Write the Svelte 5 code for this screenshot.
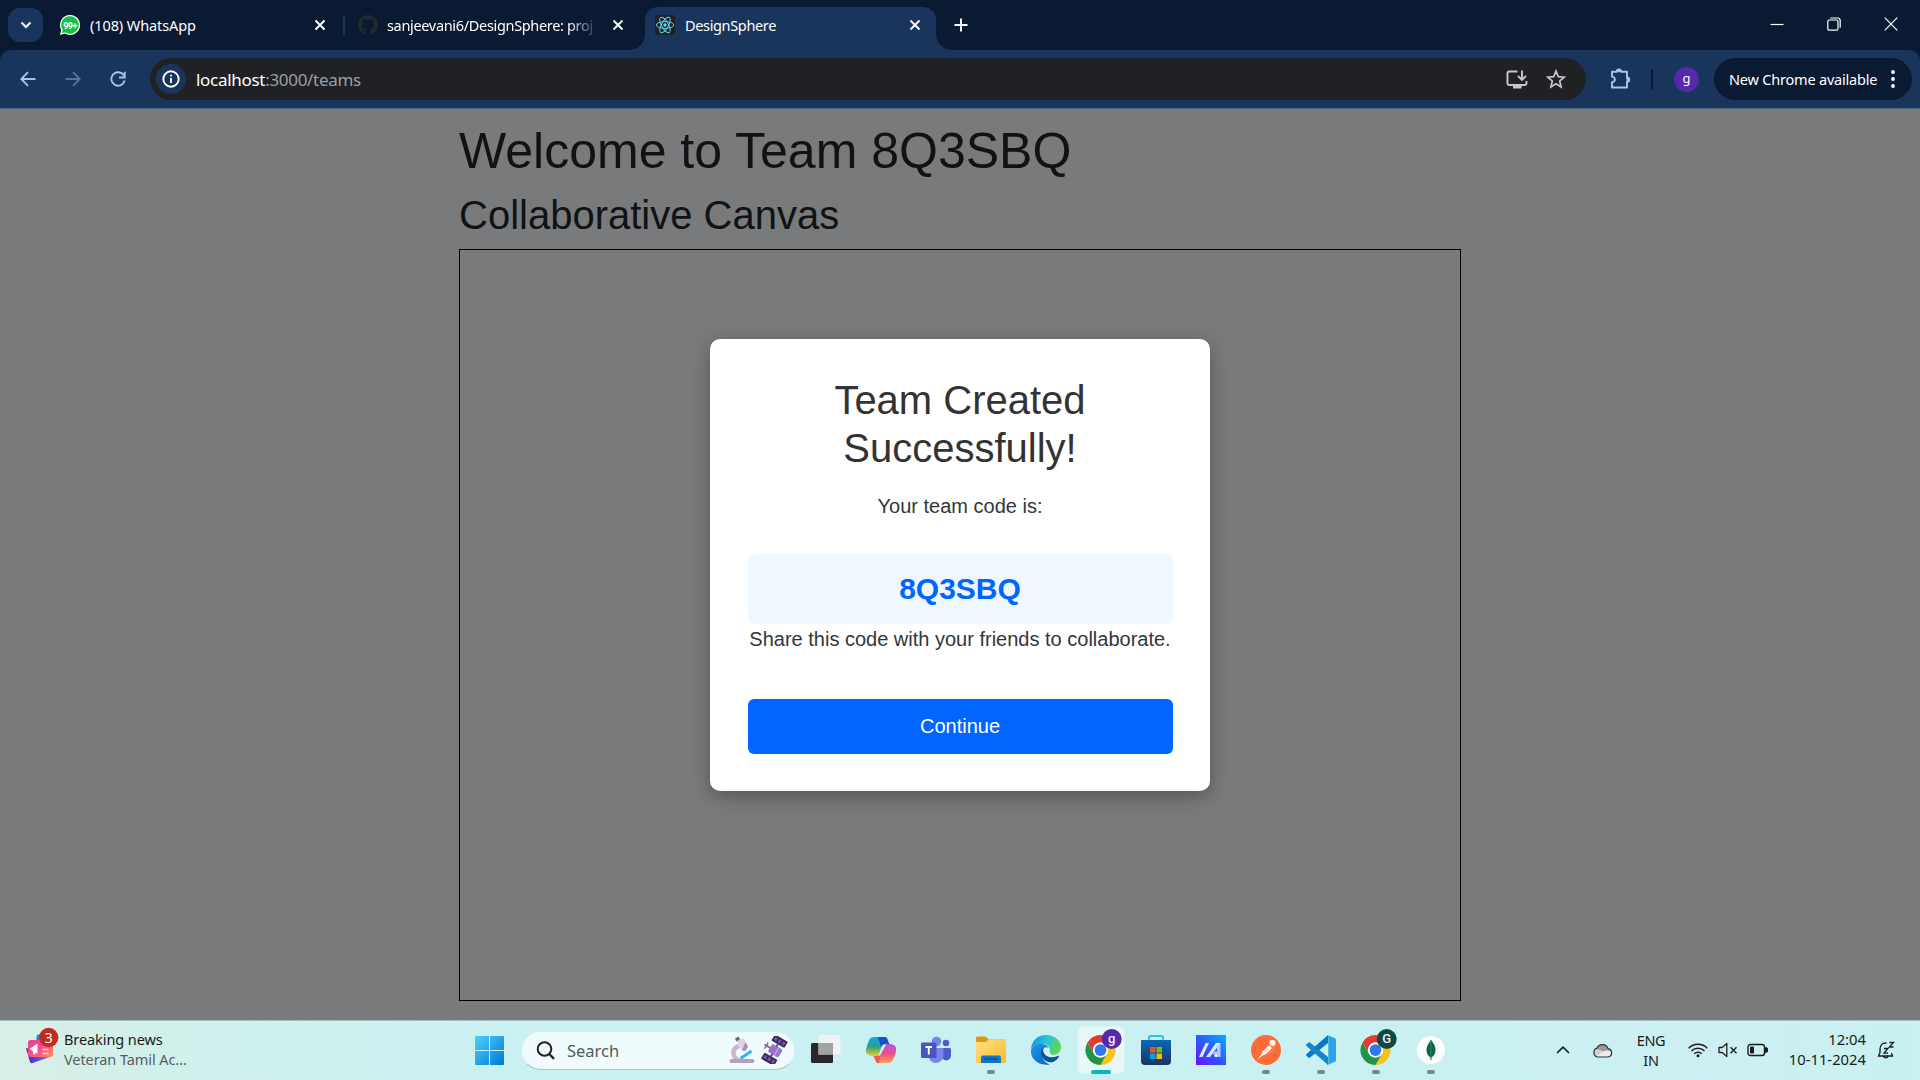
<script>
  const teamCode = '8Q3SBQ';
</script>

{#snippet closeIcon()}
  <svg class="close" viewBox="0 0 12 12" width="12" height="12"><path d="M1.5 1.5l9 9M10.5 1.5l-9 9" stroke="#fff" stroke-width="1.9" /></svg>
{/snippet}

{#snippet chromeIcon(letter, color)}
  <svg viewBox="0 0 55 60" width="55" height="60">
    <g transform="translate(12.5 15) scale(.625)">
      <path d="M24 12H44.8A24 24 0 0 0 3.2 12L13.6 30A12 12 0 0 1 24 12z" fill="#e33b2e" />
      <path d="M44.8 12H24A12 12 0 0 1 34.4 30L24 48A24 24 0 0 0 44.8 12z" fill="#fbc116" />
      <path d="M3.2 12L13.6 30A12 12 0 0 0 34.4 30L24 48A24 24 0 0 1 3.2 12z" fill="#239447" />
      <circle cx="24" cy="24" r="12" fill="#fff" />
      <circle cx="24" cy="24" r="9.4" fill="#2f78ee" />
    </g>
    <circle cx="38.7" cy="19" r="10" fill={color} />
    <text class="badge-letter" x="38.7" y="23" text-anchor="middle">{letter}</text>
  </svg>
{/snippet}

<div class="screen">
  <div class="tabs">
    <div class="tab-search">
      <svg viewBox="0 0 12 8" width="12" height="8"><path d="M1.5 1.5L6 6l4.500-4.500" fill="none" stroke="#fff" stroke-width="2" /></svg>
    </div>
    <div class="tab first">
      <svg viewBox="0 0 20 20" width="20" height="20">
        <path d="M10 0a10 10 0 1 1-5 18.600L0 20l1.200-5.200A10 10 0 0 1 10 0z" fill="#fff" />
        <path d="M10 1.300a8.700 8.700 0 1 1-4.700 16L1.800 18.300l.9-3.400A8.700 8.700 0 0 1 10 1.300z" fill="#12c143" />
        <text class="wa" x="10" y="13.500" text-anchor="middle">99+</text>
      </svg>
      <span class="title t1">(108) WhatsApp</span>
      {@render closeIcon()}
    </div>
    <div class="tab-sep"></div>
    <div class="tab second">
      <svg viewBox="0 0 16 16" width="20" height="20"><path fill="#24292f" d="M8 0C3.580 0 0 3.580 0 8c0 3.540 2.290 6.530 5.470 7.590.4.07.55-.17.55-.38 0-.19-.01-.82-.01-1.490-2.010.37-2.530-.49-2.690-.94-.09-.23-.48-.94-.82-1.130-.28-.15-.68-.52-.01-.53.63-.01 1.080.58 1.230.82.72 1.210 1.870.87 2.330.66.07-.52.28-.87.51-1.070-1.780-.2-3.640-.89-3.640-3.950 0-.87.31-1.590.82-2.150-.08-.2-.36-1.020.08-2.120 0 0 .67-.21 2.200.82a7.640 7.640 0 0 1 4 0c1.530-1.040 2.200-.82 2.200-.82.44 1.100.16 1.920.08 2.120.51.56.82 1.270.82 2.150 0 3.070-1.870 3.750-3.650 3.950.29.25.54.73.54 1.480 0 1.070-.01 1.930-.01 2.200 0 .21.15.46.55.38A8.010 8.010 0 0 0 16 8c0-4.420-3.580-8-8-8z" /></svg>
      <span class="title t2">sanjeevani6/DesignSphere: proj</span>
      {@render closeIcon()}
    </div>
    <div class="tab active">
      <svg viewBox="0 0 20 20" width="20" height="20">
        <rect width="20" height="20" rx="2" fill="#222" />
        <g fill="none" stroke="#61dafb" stroke-width=".9">
          <ellipse cx="10" cy="10" rx="8.700" ry="3.400" />
          <ellipse cx="10" cy="10" rx="8.700" ry="3.400" transform="rotate(60 10 10)" />
          <ellipse cx="10" cy="10" rx="8.700" ry="3.400" transform="rotate(120 10 10)" />
        </g>
        <circle cx="10" cy="10" r="1.700" fill="#61dafb" />
      </svg>
      <span class="title t3">DesignSphere</span>
      {@render closeIcon()}
    </div>
    <svg class="plus" viewBox="0 0 14 14" width="14" height="14"><path d="M7 .5v13M.5 7h13" stroke="#fff" stroke-width="1.900" /></svg>
    <div class="window-buttons">
      <svg viewBox="0 0 14 14" width="14" height="14"><path d="M.5 7.500h13" stroke="#fff" stroke-width="1.200" /></svg>
      <svg viewBox="0 0 14 14" width="14" height="14" fill="none" stroke="#fff" stroke-width="1.200"><rect x=".8" y="3" width="10.200" height="10.200" rx="1.500" /><path d="M3.200 1h7.300A2.700 2.700 0 0 1 13.200 3.700v7" /></svg>
      <svg viewBox="0 0 14 14" width="14" height="14"><path d="M.7.7l12.600 12.600M13.300.7L.7 13.300" stroke="#fff" stroke-width="1.200" /></svg>
    </div>
  </div>

  <div class="toolbar-back">
    <div class="toolbar">
      <svg class="back" viewBox="0 0 16 16" width="16" height="16"><path d="M15.500 8H1.500M8 1.200L1.300 8 8 14.800" fill="none" stroke="#a8c3ef" stroke-width="1.800" /></svg>
      <svg class="forward" viewBox="0 0 16 16" width="16" height="16"><path d="M.5 8h14M8 1.200L14.700 8 8 14.800" fill="none" stroke="#56729f" stroke-width="1.800" /></svg>
      <svg class="reload" viewBox="0 0 16 16" width="16" height="16"><path d="M13.800 4.500A6.700 6.700 0 1 0 14.600 9.500" fill="none" stroke="#a8c3ef" stroke-width="1.900" /><path d="M14.700.8v5.700H9" fill="none" stroke="#a8c3ef" stroke-width="1.900" /></svg>
      <div class="omnibox">
        <div class="info">
          <svg viewBox="0 0 18 18" width="18" height="18"><circle cx="9" cy="9" r="7.700" fill="none" stroke="#fff" stroke-width="1.900" /><path d="M9 8v5M9 4.800v1.800" stroke="#fff" stroke-width="1.800" /></svg>
        </div>
        <span class="url"><b>localhost</b>:3000/teams</span>
        <svg class="install" viewBox="0 0 22 19" width="22" height="19"><path d="M11.500 1.500H3a1.500 1.500 0 0 0-1.500 1.500v10.500A1.500 1.500 0 0 0 3 15h16a1.500 1.500 0 0 0 1.500-1.500V11" fill="none" stroke="#c7c7c7" stroke-width="1.900" /><path d="M7 15h8.500v3.500H7z" fill="#c7c7c7" /><path d="M16 .5v9M12 6l4 4 4-4" fill="none" stroke="#c7c7c7" stroke-width="1.900" /></svg>
        <svg class="star" viewBox="0 0 20 20" width="20" height="20"><path d="M10 2l2.300 5.600 6 .5-4.600 3.900 1.400 5.900L10 14.700 4.900 17.900l1.400-5.900L1.700 8.100l6-.5z" fill="none" stroke="#c7c7c7" stroke-width="1.700" /></svg>
      </div>
      <svg class="puzzle" viewBox="0 0 22 22" width="22" height="22"><path d="M2 3.700h4.700a2.300 2.300 0 0 1 4.600 0H17v5.800a2.200 2.200 0 0 1 0 4.400v5.600H2v-5.200c3.800-.5 3.800-5.200 0-5.700z" fill="none" stroke="#a8c3ef" stroke-width="1.900" stroke-linejoin="round" /><path d="M6.700 3.700a2.300 2.300 0 0 1 4.600 0zM17 9.500a2.200 2.200 0 0 1 0 4.400z" fill="#a8c3ef" stroke="#a8c3ef" /></svg>
      <div class="tool-sep"></div>
      <div class="avatar">g</div>
      <div class="update">
        <span>New Chrome available</span>
        <svg viewBox="0 0 4 18" width="4" height="18" fill="#fff"><circle cx="2" cy="2" r="1.900" /><circle cx="2" cy="9" r="1.900" /><circle cx="2" cy="16" r="1.900" /></svg>
      </div>
    </div>
  </div>

  <div class="page">
    <main class="workspace">
      <h1>Welcome to Team {teamCode}</h1>
      <h2>Collaborative Canvas</h2>
      <div class="canvas"></div>
    </main>
    <section class="modal">
      <h2>Team Created Successfully!</h2>
      <p>Your team code is:</p>
      <div class="code">{teamCode}</div>
      <p>Share this code with your friends to collaborate.</p>
      <button>Continue</button>
    </section>
  </div>

  <footer class="taskbar">
    <div class="news">
      <svg viewBox="0 0 36 40" width="36" height="40">
        <defs>
          <linearGradient id="nw" x1="0" y1="0" x2="1" y2="1"><stop offset="0" stop-color="#ec3f86" /><stop offset=".5" stop-color="#f64f95" /><stop offset="1" stop-color="#ff9150" /></linearGradient>
          <linearGradient id="nb" x1="0" y1="0" x2="1" y2="0"><stop offset="0" stop-color="#3a2fc4" /><stop offset="1" stop-color="#9a5bff" /></linearGradient>
        </defs>
        <path d="M12 9l8-2v8h-9z" fill="#2687e8" />
        <path d="M1 22l24 5v4L7.500 37a2 2 0 0 1-2.700-1.500z" fill="url(#nb)" />
        <rect x="3" y="14" width="25" height="17" rx="2.500" fill="url(#nw)" />
        <path d="M4.500 23l8-5.500v10zM7.500 25h3v3.500h-2z" fill="#fff" />
        <path d="M17.500 23.500h6M17.500 27.500h6" stroke="#ffd2d8" stroke-width="1.600" />
        <circle cx="23.700" cy="11.500" r="9.700" fill="#c42b1c" />
        <text class="count" x="23.700" y="16.500" text-anchor="middle">3</text>
      </svg>
      <div class="headline"><span class="n1">Breaking news</span><span class="n2">Veteran Tamil Ac...</span></div>
    </div>

    <div class="app">
      <svg viewBox="0 0 29 29" width="29" height="29">
        <defs><linearGradient id="win" x1="0" y1="0" x2="1" y2="1" gradientUnits="objectBoundingBox"><stop offset="0" stop-color="#4fd0fb" /><stop offset="1" stop-color="#0078d4" /></linearGradient></defs>
        <path d="M1 0h13v14H0V1a1 1 0 0 1 1-1zM15 0h13a1 1 0 0 1 1 1v13H15zM0 15h14v14H1a1 1 0 0 1-1-1zM15 15h14v13a1 1 0 0 1-1 1H15z" fill="url(#win)" />
      </svg>
    </div>

    <div class="search">
      <svg viewBox="0 0 19 19" width="19" height="19"><circle cx="8.500" cy="8" r="6.800" fill="none" stroke="#222" stroke-width="2" /><path d="M13.300 13l4.700 4.800" stroke="#222" stroke-width="2.400" /></svg>
      <span>Search</span>
      <svg class="scope" viewBox="0 0 26 28" width="26" height="28">
        <path d="M9.500 8C1 10 .500 18 5 23.500h7C5 20 5 14 11 12z" fill="#c9b8d2" />
        <path d="M8.500 5l6-3 4.500 8.500-6 4.500z" fill="#ded0e3" />
        <path d="M13 14.500L16.500 6l2.500 4.500-2.500 4.500z" fill="#a78fb8" />
        <path d="M6 2.500L9.500.5l1.500 3-3.500 2z" fill="#6d666f" />
        <path d="M11.500 22.500L22.500 15" stroke="#35aeea" stroke-width="2.800" />
        <rect x=".5" y="23" width="25" height="4" rx="2" fill="#b0a1be" />
      </svg>
      <svg class="sat" viewBox="0 0 28 28" width="28" height="28">
        <g transform="rotate(30 14 14)">
          <rect x="7" y="0" width="15" height="7" rx="1" fill="#35284d" /><rect x="7" y="21" width="15" height="7" rx="1" fill="#35284d" />
          <path d="M8.500 3.500h3M13 3.500h3M17.500 3.500h3M8.500 24.500h3M13 24.500h3M17.500 24.500h3" stroke="#7750b6" stroke-width="3.500" />
          <path d="M14.500 7v14" stroke="#5b487a" stroke-width="2" />
          <rect x="9.500" y="9.500" width="12" height="9" rx="1.500" fill="#9871cf" /><path d="M17 9.500v9" stroke="#b697df" stroke-width="2" /><path d="M9.500 14H3" stroke="#7c5aab" stroke-width="1.500" /><path d="M3.500 9.500a6 6 0 0 0 0 9z" fill="#8a68bd" transform="rotate(180 4 14)" />
        </g>
      </svg>
    </div>

    <div class="app">
      <svg viewBox="0 0 30 30" width="30" height="30"><rect x="0" y="8" width="22" height="20" rx="1.500" fill="#282828" /><path d="M9 0h19a1.500 1.500 0 0 1 1.500 1.500v18H7.500v-18A1.500 1.500 0 0 1 9 0z" fill="#f4f2f3" opacity=".9" /><path d="M7.500 8H22v11.500H7.500z" fill="#a3a3a3" /></svg>
    </div>
    <div class="app">
      <svg viewBox="0 0 30 28" width="30" height="28">
        <defs>
          <linearGradient id="cpa" x1="0" y1="0" x2="0" y2="1"><stop offset="0" stop-color="#12a4ef" /><stop offset=".5" stop-color="#2d9f88" /><stop offset="1" stop-color="#e5d51f" /></linearGradient>
          <linearGradient id="cpb" x1="0" y1="0" x2="0" y2="1"><stop offset="0" stop-color="#ac5be8" /><stop offset=".5" stop-color="#ee4d91" /><stop offset="1" stop-color="#ffa148" /></linearGradient>
        </defs>
        <path d="M8 1h11c3 0 3 7 5 7h-4c-3 0-4 1-5 4l-2 6c-1 3-3 2-6 2C-1 20-1 15 1 10 3 4 4 1 8 1z" fill="url(#cpa)" />
        <path d="M12 1h7c3 0 3 7 5 7h-4c-3 0-4 1-5 3z" fill="#1650c9" />
        <path d="M22 27H12c-3 0-3-7-5-7h3c3 0 4-1 5-4l2-6c1-3 3-2 6-2 8 0 8 5 6 11-2 5-3 8-7 8z" fill="url(#cpb)" />
        <path d="M7 20h3c3 0 4-1 5-4l1-3-3 14h-1c-3 0-3-7-5-7z" fill="#f15b4a" />
        <path d="M17.500 8.500h2.500L14 19.500h-3c2-.5 3-1.500 4-4.500z" fill="#dff6f5" />
      </svg>
    </div>
    <div class="app">
      <svg viewBox="0 0 30 28" width="30" height="28">
        <circle cx="15.500" cy="5.500" r="4.800" fill="#7b83eb" /><circle cx="25" cy="7" r="3.300" fill="#5059c9" />
        <path d="M20 12h8.500a1.500 1.500 0 0 1 1.500 1.500V19c0 5-5 7-8 4z" fill="#5059c9" />
        <path d="M9 12h12a1.500 1.500 0 0 1 1.500 1.500V19c0 10-15 11-15 0z" fill="#7b83eb" />
        <rect x="0" y="6.500" width="15.500" height="15.500" rx="1.500" fill="#4b53bc" />
        <path d="M4.500 11h6.500M7.750 11v7.500" stroke="#fff" stroke-width="1.900" />
      </svg>
    </div>
    <div class="app">
      <svg viewBox="0 0 30 28" width="30" height="28">
        <defs><linearGradient id="fold" x1="0" y1="0" x2="1" y2="1"><stop offset="0" stop-color="#ffe28a" /><stop offset="1" stop-color="#fdb92a" /></linearGradient></defs>
        <path d="M0 2a1.500 1.500 0 0 1 1.500-1.500h8L13 3.500h15.500A1.500 1.500 0 0 1 30 5v5H0z" fill="#dd9b0c" />
        <path d="M0 6h10l3-2.500h15.500A1.500 1.500 0 0 1 30 5v22H0z" fill="url(#fold)" />
        <path d="M5 27v-5.500a2 2 0 0 1 2-2h16a2 2 0 0 1 2 2V27z" fill="#0f76c8" /><path d="M8.500 23h13" stroke="#084f91" stroke-width="1.500" />
      </svg>
      <i class="dot"></i>
    </div>
    <div class="app">
      <svg viewBox="0 0 30 30" width="30" height="30">
        <defs>
          <linearGradient id="ed1" x1="0" y1=".2" x2="1" y2=".5"><stop offset="0" stop-color="#1b8fe0" /><stop offset=".5" stop-color="#2dc2dc" /><stop offset="1" stop-color="#60d94d" /></linearGradient>
          <linearGradient id="ed2" x1="0" y1="0" x2="1" y2="1"><stop offset="0" stop-color="#1c9be8" /><stop offset="1" stop-color="#0b62bc" /></linearGradient>
        </defs>
        <path d="M0 14C1 5 7 0 15 0c9 0 15 6 15 12 0 5-4 8-8 8-3 0-5-1-4-3 2-4-1-8-6-8C7 9 2 11 0 14z" fill="url(#ed1)" />
        <path d="M0 15c1-4 6-6.500 11-6 4 .3 6 2 7 5-5-1.500-8 2-7 7 1 4 4 7.500 8 8.500C9 31-1 25 0 15z" fill="url(#ed2)" />
        <path d="M10 17c-.5 7 7 12.500 13 9.500 2-1 4-3 5-5 0-1-.7-1-1.500-.5C20 24 12 22 12.500 13.500 11 14 10 15.500 10 17z" fill="#0d529c" />
        <circle cx="15.500" cy="15.500" r="3.200" fill="#d3f4f4" />
        <path d="M13 17c1 4 5 5 9 4l-4-4z" fill="#d3f4f4" />
      </svg>
    </div>
    <div class="app selected">{@render chromeIcon('g', '#5529a8')}<i class="dot wide"></i></div>
    <div class="app">
      <svg viewBox="0 0 30 30" width="30" height="30">
        <defs><linearGradient id="st" x1="0" y1="0" x2="0" y2="1"><stop offset="0" stop-color="#0b68b4" /><stop offset="1" stop-color="#173564" /></linearGradient></defs>
        <path d="M8 7V2.500A1.500 1.500 0 0 1 9.500 1h11A1.500 1.500 0 0 1 22 2.500V7" fill="none" stroke="#2cc0f3" stroke-width="2" />
        <path d="M0 6a1 1 0 0 1 1-1h28a1 1 0 0 1 1 1v20a4 4 0 0 1-4 4H4a4 4 0 0 1-4-4z" fill="url(#st)" />
        <path d="M9 12h5.500v5.500H9z" fill="#f25022" /><path d="M15.500 12H21v5.500h-5.500z" fill="#7fba00" /><path d="M9 18.500h5.500V24H9z" fill="#00a4ef" /><path d="M15.500 18.500H21V24h-5.500z" fill="#ffb900" />
      </svg>
    </div>
    <div class="app">
      <svg viewBox="0 0 30 30" width="30" height="30">
        <defs><linearGradient id="as" x1="0" y1="1" x2="1" y2="0"><stop offset="0" stop-color="#6a11ff" /><stop offset=".5" stop-color="#285cff" /><stop offset="1" stop-color="#08aefe" /></linearGradient></defs>
        <path d="M0 0h30v30H0z" fill="url(#as)" />
        <path d="M3 22L9.500 8H13L6.500 22zM10 22L20 8h4.500L14 22z" fill="#dfe6ff" /><path d="M20.500 11.500L24.500 8V22H21.500v-2.500h-5l2-3h3z" fill="#b7caff" /><circle cx="20" cy="20.500" r="1.500" fill="#fff" />
      </svg>
    </div>
    <div class="app">
      <svg viewBox="0 0 30 30" width="30" height="30">
        <circle cx="15" cy="15" r="15" fill="#ff6c37" />
        <circle cx="21.500" cy="8" r="3" fill="#fff" /><path d="M18 10.500l3 2.500-6 6-3.500 1.500-5 4 4-5.500 1-2.500z" fill="#fff" /><path d="M12 18.500l5.500-5.500M23 11l-1 4.500-4 2" stroke="#ff9c78" fill="none" stroke-width=".9" />
      </svg>
      <i class="dot"></i>
    </div>
    <div class="app">
      <svg viewBox="0 0 30 30" width="30" height="30">
        <path d="M22 0v8L4 22.500a1.300 1.300 0 0 1-1.700 0L.5 20.800a1.300 1.300 0 0 1 0-1.900z" fill="#0879c4" />
        <path d="M22 30v-8L4 7.500a1.300 1.300 0 0 0-1.700 0L.5 9.200a1.300 1.300 0 0 0 0 1.900z" fill="#1586ce" />
        <path d="M21.500 0L29 3.300a1.700 1.700 0 0 1 1 1.500v20.400a1.700 1.700 0 0 1-1 1.500L21.500 30c.5-.4.8-1 .8-1.700V1.700c0-.7-.3-1.300-.8-1.700z" fill="#2ba2ec" />
      </svg>
      <i class="dot"></i>
    </div>
    <div class="app">{@render chromeIcon('G', '#0d4a40')}<i class="dot"></i></div>
    <div class="app">
      <svg viewBox="0 0 30 30" width="30" height="30">
        <circle cx="15" cy="15" r="14" fill="#fbfdfd" />
        <path d="M15 5c3 4 4.500 6.500 4.500 10 0 4-2 6-4 7.500l-.3 2.500h-.4l-.3-2.500c-2-1.500-4-3.500-4-7.500 0-3.500 1.500-6 4.500-10z" fill="#116149" /><path d="M15 5v20" stroke="#10aa50" stroke-width=".8" />
      </svg>
      <i class="dot"></i>
    </div>

    <div class="tray">
      <svg viewBox="0 0 14 8" width="14" height="8"><path d="M1 7l6-5.800L13 7" fill="none" stroke="#1b1b1b" stroke-width="1.600" /></svg>
      <svg class="cloud" viewBox="0 0 21 15" width="21" height="15"><path d="M5.500 14A4.700 4.700 0 0 1 5 5a6 6 0 0 1 11 .5A4.300 4.300 0 0 1 16 14z" fill="#999" /><path d="M5.500 14a4.700 4.700 0 0 1-3.500-7c5-2 7 .5 9 1.500L18 13l-2 1z" fill="#cfcfcf" /><path d="M4 13.800l7-5.300c3-1.500 6-1.500 8 .500 0 3-1.500 5-3 5z" fill="#eee" /><path d="M5.500 14A4.700 4.700 0 0 1 5 5a6 6 0 0 1 11 .5A4.300 4.300 0 0 1 16 14z" fill="none" stroke="#333" stroke-width="1.200" /></svg>
      <div class="lang"><span>ENG</span><span>IN</span></div>
      <svg class="wifi" viewBox="0 0 20 16" width="20" height="16" fill="none" stroke="#1b1b1b" stroke-width="1.400"><path d="M.7 6.200a13 13 0 0 1 18.600 0M3.500 9a9.200 9.200 0 0 1 13 0M6.200 11.700a5.500 5.500 0 0 1 7.600 0" /><circle cx="10" cy="13.700" r="1.500" fill="#1b1b1b" stroke="none" /></svg>
      <svg class="speaker" viewBox="0 0 20 16" width="20" height="16" fill="none" stroke="#1b1b1b" stroke-width="1.300"><path d="M1 5.500h3.200L8.800 1.500v13L4.200 10.500H1z" stroke-linejoin="round" /><path d="M12.500 5.300l6 6M18.500 5.300l-6 6" /></svg>
      <svg class="battery" viewBox="0 0 21 14" width="21" height="14"><rect x="1" y="1.500" width="16.500" height="11" rx="2.500" fill="none" stroke="#1b1b1b" stroke-width="1.400" /><rect x="3" y="3.500" width="4" height="7" rx="1" fill="#1b1b1b" /><path d="M18.500 4.500a2.500 2.500 0 0 1 0 5z" fill="#1b1b1b" stroke="#1b1b1b" /></svg>
      <div class="clock"><span>12:04</span><span>10-11-2024</span></div>
      <svg class="bell" viewBox="0 0 18 19" width="18" height="19" fill="none" stroke="#1b1b1b" stroke-width="1.300"><path d="M9.500 2C5 1.800 3 4.500 3 8v3.500L1.500 15h14L14.500 12M6.500 15.500a2.500 2.500 0 0 0 4.500 0" /><path d="M7 7.500h4l-4 4.700h4M12.500 1.500h4L12.500 6h4" /></svg>
    </div>
  </footer>
</div>

<style>
  :global(body) { margin: 0; overflow: hidden; }
  * { box-sizing: border-box; }
  svg { display: block; flex: none; }
  .screen { width: 1920px; height: 1080px; display: flex; flex-direction: column; font-family: "Noto Sans", "Open Sans", sans-serif; }

  .tabs { height: 50px; flex: none; background: #0a1a32; display: flex; align-items: flex-start; padding-left: 8px; color: #fff; }
  .tab-search { width: 35px; height: 34px; margin-top: 8px; border-radius: 12px; background: #1a355c; display: grid; place-items: center; }
  .tab { height: 43px; margin-top: 7px; padding-bottom: 7px; display: flex; align-items: center; flex: none; }
  .title { flex: 1; min-width: 0; margin-left: 10px; font-size: 14.500px; line-height: 20px; white-space: nowrap; }
  .first { width: 285px; margin-left: 17px; padding-right: 19px; }
  .tab-sep { width: 2px; height: 20px; margin: 15px 13px 0 -2px; background: #1a355c; }
  .second { width: 287px; padding-right: 21px; }
  .second .title { margin-left: 9px; margin-right: 15px; -webkit-mask-image: linear-gradient(90deg, #000 86%, transparent 101%); mask-image: linear-gradient(90deg, #000 86%, transparent 101%); }
  .t1 { letter-spacing: -.1px; }
  .t2 { letter-spacing: -.33px; }
  .t3 { letter-spacing: -.35px; }
  .active { width: 291px; padding-left: 10px; padding-right: 15px; background: #1a355c; border-radius: 13px 13px 0 0; position: relative; }
  .active::before, .active::after { content: ""; position: absolute; bottom: 0; width: 15px; height: 15px; }
  .active::before { left: -15px; background: radial-gradient(circle at 0 0, transparent 14.500px, #1a355c 15px); }
  .active::after { right: -15px; background: radial-gradient(circle at 100% 0, transparent 14.500px, #1a355c 15px); }
  .plus { margin: 18px 0 0 18px; }
  .window-buttons { margin: 17px 22px 0 auto; display: flex; gap: 43px; }

  .toolbar-back { height: 59px; flex: none; background: #0a1a32; }
  .toolbar { height: 59px; background: #1a355c; border-radius: 11px 11px 0 0; border-bottom: 1px solid #50678a; display: flex; align-items: center; padding: 0 8px 0 20px; }
  .forward { margin-left: 29px; }
  .reload { margin-left: 29px; }
  .omnibox { width: 1436px; height: 42px; margin-left: 24px; border-radius: 21px; background: #202124; display: flex; align-items: center; padding: 0 20px 0 6px; }
  .info { width: 30px; height: 30px; border-radius: 50%; background: #1a355c; display: grid; place-items: center; }
  .url { margin-left: 10px; padding-top: 1px; flex: 1; color: #9aa0a6; font-size: 17px; line-height: 24px; letter-spacing: -.3px; }
  .url b { font-weight: 400; color: #fff; }
  .star { margin-left: 18px; }
  .puzzle { margin-left: 24px; }
  .tool-sep { width: 2px; height: 20px; margin-left: 19px; background: #0a1a32; }
  .avatar { width: 25px; height: 25px; margin-left: 21px; border-radius: 50%; background: #5529a8; color: #fff; font-size: 13px; line-height: 22px; text-align: center; }
  .update { width: 198px; height: 42px; margin-left: 15px; border-radius: 21px; background: #0a1a32; color: #fff; display: flex; align-items: center; justify-content: space-between; padding: 0 17px 0 15px; font-size: 14.500px; line-height: 20px; white-space: nowrap; letter-spacing: -.2px; }
  .update span { margin-top: -1px; }

  .page { height: 911px; flex: none; display: grid; grid-template: 911px / 1920px; background: #797a7c; font-family: "Liberation Sans", Arial, sans-serif; color: #101214; }
  .workspace { grid-area: 1 / 1; width: 1002px; margin: 12px auto 0; }
  h1, h2, p { margin: 0; font-weight: 400; }
  h1 { font-size: 50px; line-height: 60px; margin-bottom: 10px; }
  h2 { font-size: 40px; line-height: 48px; }
  .workspace h2 { margin-bottom: 10px; }
  .canvas { height: 752px; border: 1px solid #000; }
  .modal { grid-area: 1 / 1; width: 500px; height: 452px; margin: 230px auto 0; padding: 37px 37.500px; background: #fff; border-radius: 10px; box-shadow: 0 5px 19px rgba(0, 0, 0, .3); display: flex; flex-direction: column; text-align: center; z-index: 1; }
  .modal h2 { color: #333; margin-bottom: 19px; }
  .modal p { color: #333639; font-size: 20px; line-height: 30px; white-space: nowrap; }
  .code { height: 70px; margin-top: 33px; border-radius: 6px; background: #f0f8ff; color: #06f; font-size: 30px; line-height: 69px; font-weight: 700; }
  button { height: 55px; margin-top: auto; border: 0; border-radius: 6px; background: #06f; color: #fff; font: 20px/55px "Liberation Sans", Arial, sans-serif; padding: 0; }

  .taskbar { height: 60px; flex: none; display: flex; align-items: center; background: linear-gradient(90deg, #d9efe6 0, #d0f0ec 180px, #caf1f1 500px, #caf1f1 1500px, #cdeff3 1700px, #c9f1f0 100%); box-shadow: inset 0 1px #a7bcbc; }
  .news { width: 462px; padding-left: 25px; display: flex; align-items: center; flex: none; }
  .news svg { margin-top: -8px; }
  .headline { display: flex; flex-direction: column; margin-left: 3px; font-size: 14.500px; letter-spacing: -.08px; line-height: 20px; margin-top: -3px; }
  .n1 { color: #191919; }
  .n2 { color: #56615f; }
  .app { width: 55px; height: 60px; flex: none; display: grid; place-items: center; position: relative; }
  .selected::before { content: ""; position: absolute; inset: 6px 3.500px; border-radius: 6px; background: #e6f8f8; border: 1px solid #daf1f1; }
  .selected svg { position: relative; }
  .dot { position: absolute; left: 24px; bottom: 6px; width: 8px; height: 4px; border-radius: 2px; background: #768786; }
  .wide { left: 17.500px; width: 20px; background: #08b5c4; }
  .search { width: 274px; height: 39px; margin: 0 3px 0 4px; border-radius: 20px; background: #effbfc; border: 1px solid #d9efef; border-bottom-color: #a8c5c5; display: flex; align-items: center; padding: 0 6px 0 14px; flex: none; }
  .search span { margin-left: 12px; flex: 1; color: #505b5b; font-size: 16.500px; }
  .sat { margin-left: 5px; }
  .tray { margin-left: auto; margin-right: 25px; display: flex; align-items: center; color: #1b1b1b; font-size: 14.500px; line-height: 20px; }
  .cloud { margin-left: 22px; }
  .lang { width: 40px; margin-left: 18px; display: flex; flex-direction: column; align-items: center; letter-spacing: -.3px; }
  .wifi { margin-left: 17px; }
  .speaker { margin-left: 10px; }
  .battery { margin-left: 9px; }
  .clock { width: 98px; display: flex; flex-direction: column; align-items: flex-end; margin-top: -2px; font-size: 14.800px; }
  .bell { margin-left: 11px; }
  .wa { font: 700 9px "Roboto", sans-serif; fill: #fff; letter-spacing: -.5px; }
  .badge-letter { font: 500 13px "Roboto", sans-serif; fill: #f3eaff; }
  .count { font: 14px "Noto Sans", sans-serif; fill: #fff; }
</style>
